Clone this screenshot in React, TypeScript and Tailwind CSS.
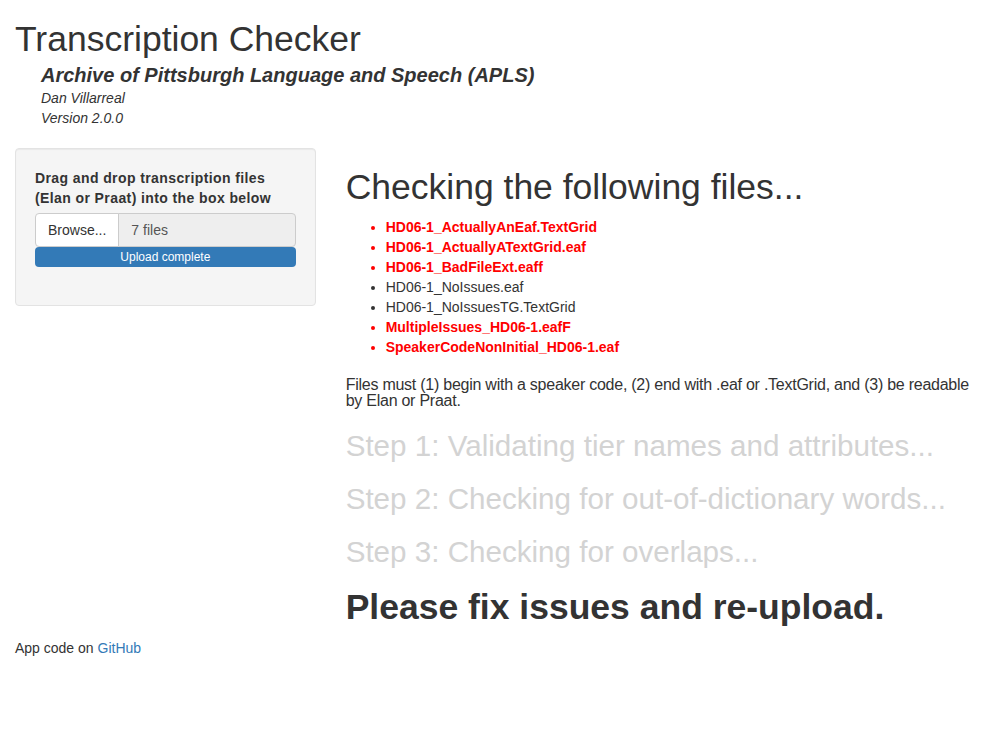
import React from 'react';

const files: { name: string; bad: boolean }[] = [
    { name: 'HD06-1_ActuallyAnEaf.TextGrid', bad: true },
    { name: 'HD06-1_ActuallyATextGrid.eaf', bad: true },
    { name: 'HD06-1_BadFileExt.eaff', bad: true },
    { name: 'HD06-1_NoIssues.eaf', bad: false },
    { name: 'HD06-1_NoIssuesTG.TextGrid', bad: false },
    { name: 'MultipleIssues_HD06-1.eafF', bad: true },
    { name: 'SpeakerCodeNonInitial_HD06-1.eaf', bad: true },
];

const steps = [
    'Step 1: Validating tier names and attributes...',
    'Step 2: Checking for out-of-dictionary words...',
    'Step 3: Checking for overlaps...',
];

const App: React.FC = () => {
    return (
        <div className="min-h-screen bg-white px-[15px] text-[14px] leading-[20px] text-[#333] font-['Liberation_Sans',Arial,sans-serif]">
            {/* title panel */}
            <h1 className="pt-[20px] text-[35.5px] leading-[39.6px] font-normal">Transcription Checker</h1>
            <div className="pl-[26px]">
                <h4 className="mt-[5px] text-[20px] leading-[20px] font-bold italic">
                    Archive of Pittsburgh Language and Speech (APLS)
                </h4>
                <div className="mt-[3px] text-[14px] italic">Dan Villarreal</div>
                <div className="text-[14px] italic">Version 2.0.0</div>
            </div>

            <div className="-mx-[15px] mt-[20px] flex">
                {/* sidebar */}
                <div className="w-[330.67px] shrink-0 px-[15px]">
                    <div className="rounded-[4px] border border-[#e3e3e3] bg-[#f5f5f5] p-[19px] pb-[38px] shadow-[inset_0_1px_1px_rgba(0,0,0,0.05)]">
                        <label className="mb-[5px] block font-bold tracking-[0.4px]">
                            Drag and drop transcription files (Elan or Praat) into the box below
                        </label>
                        <div className="flex h-[34px]">
                            <div className="flex items-center rounded-l-[4px] border border-[#ccc] bg-white px-[12px] text-[#333]">
                                Browse...
                            </div>
                            <div className="-ml-px flex flex-1 items-center rounded-r-[4px] border border-[#ccc] bg-[#eee] px-[12px] text-[#555]">
                                7 files
                            </div>
                        </div>
                        <div className="flex h-[20px] items-center justify-center rounded-[4px] bg-[#337ab7] text-[12px] leading-[20px] text-white">
                            Upload complete
                        </div>
                    </div>
                </div>

                {/* main panel */}
                <div className="flex-1 px-[15px]">
                    <h1 className="mt-[20px] text-[35.5px] leading-[39.6px] font-normal">Checking the following files...</h1>
                    <ul className="mt-[10px] list-disc pl-[40px]">
                        {files.map((f) => (
                            <li key={f.name} className={f.bad ? 'font-bold text-[#ff0000]' : 'text-[#333]'}>
                                {f.name}
                            </li>
                        ))}
                    </ul>
                    <p className="mt-[20px] text-[16px] leading-[16px] tracking-[-0.25px]">
                        Files must (1) begin with a speaker code, (2) end with .eaf or .TextGrid, and (3) be readable by Elan or Praat.
                    </p>
                    {steps.map((s) => (
                        <h2 key={s} className="mt-[20px] text-[29.6px] leading-[33px] font-normal text-[#d3d3d3]">
                            {s}
                        </h2>
                    ))}
                    <h1 className="mt-[20px] mb-[10px] text-[35.5px] leading-[39.6px] font-bold">
                        Please fix issues and re-upload.
                    </h1>
                </div>
            </div>

            <div>
                App code on <a className="text-[#337ab7]" href="#">GitHub</a>
            </div>
        </div>
    );
};

export default App;
